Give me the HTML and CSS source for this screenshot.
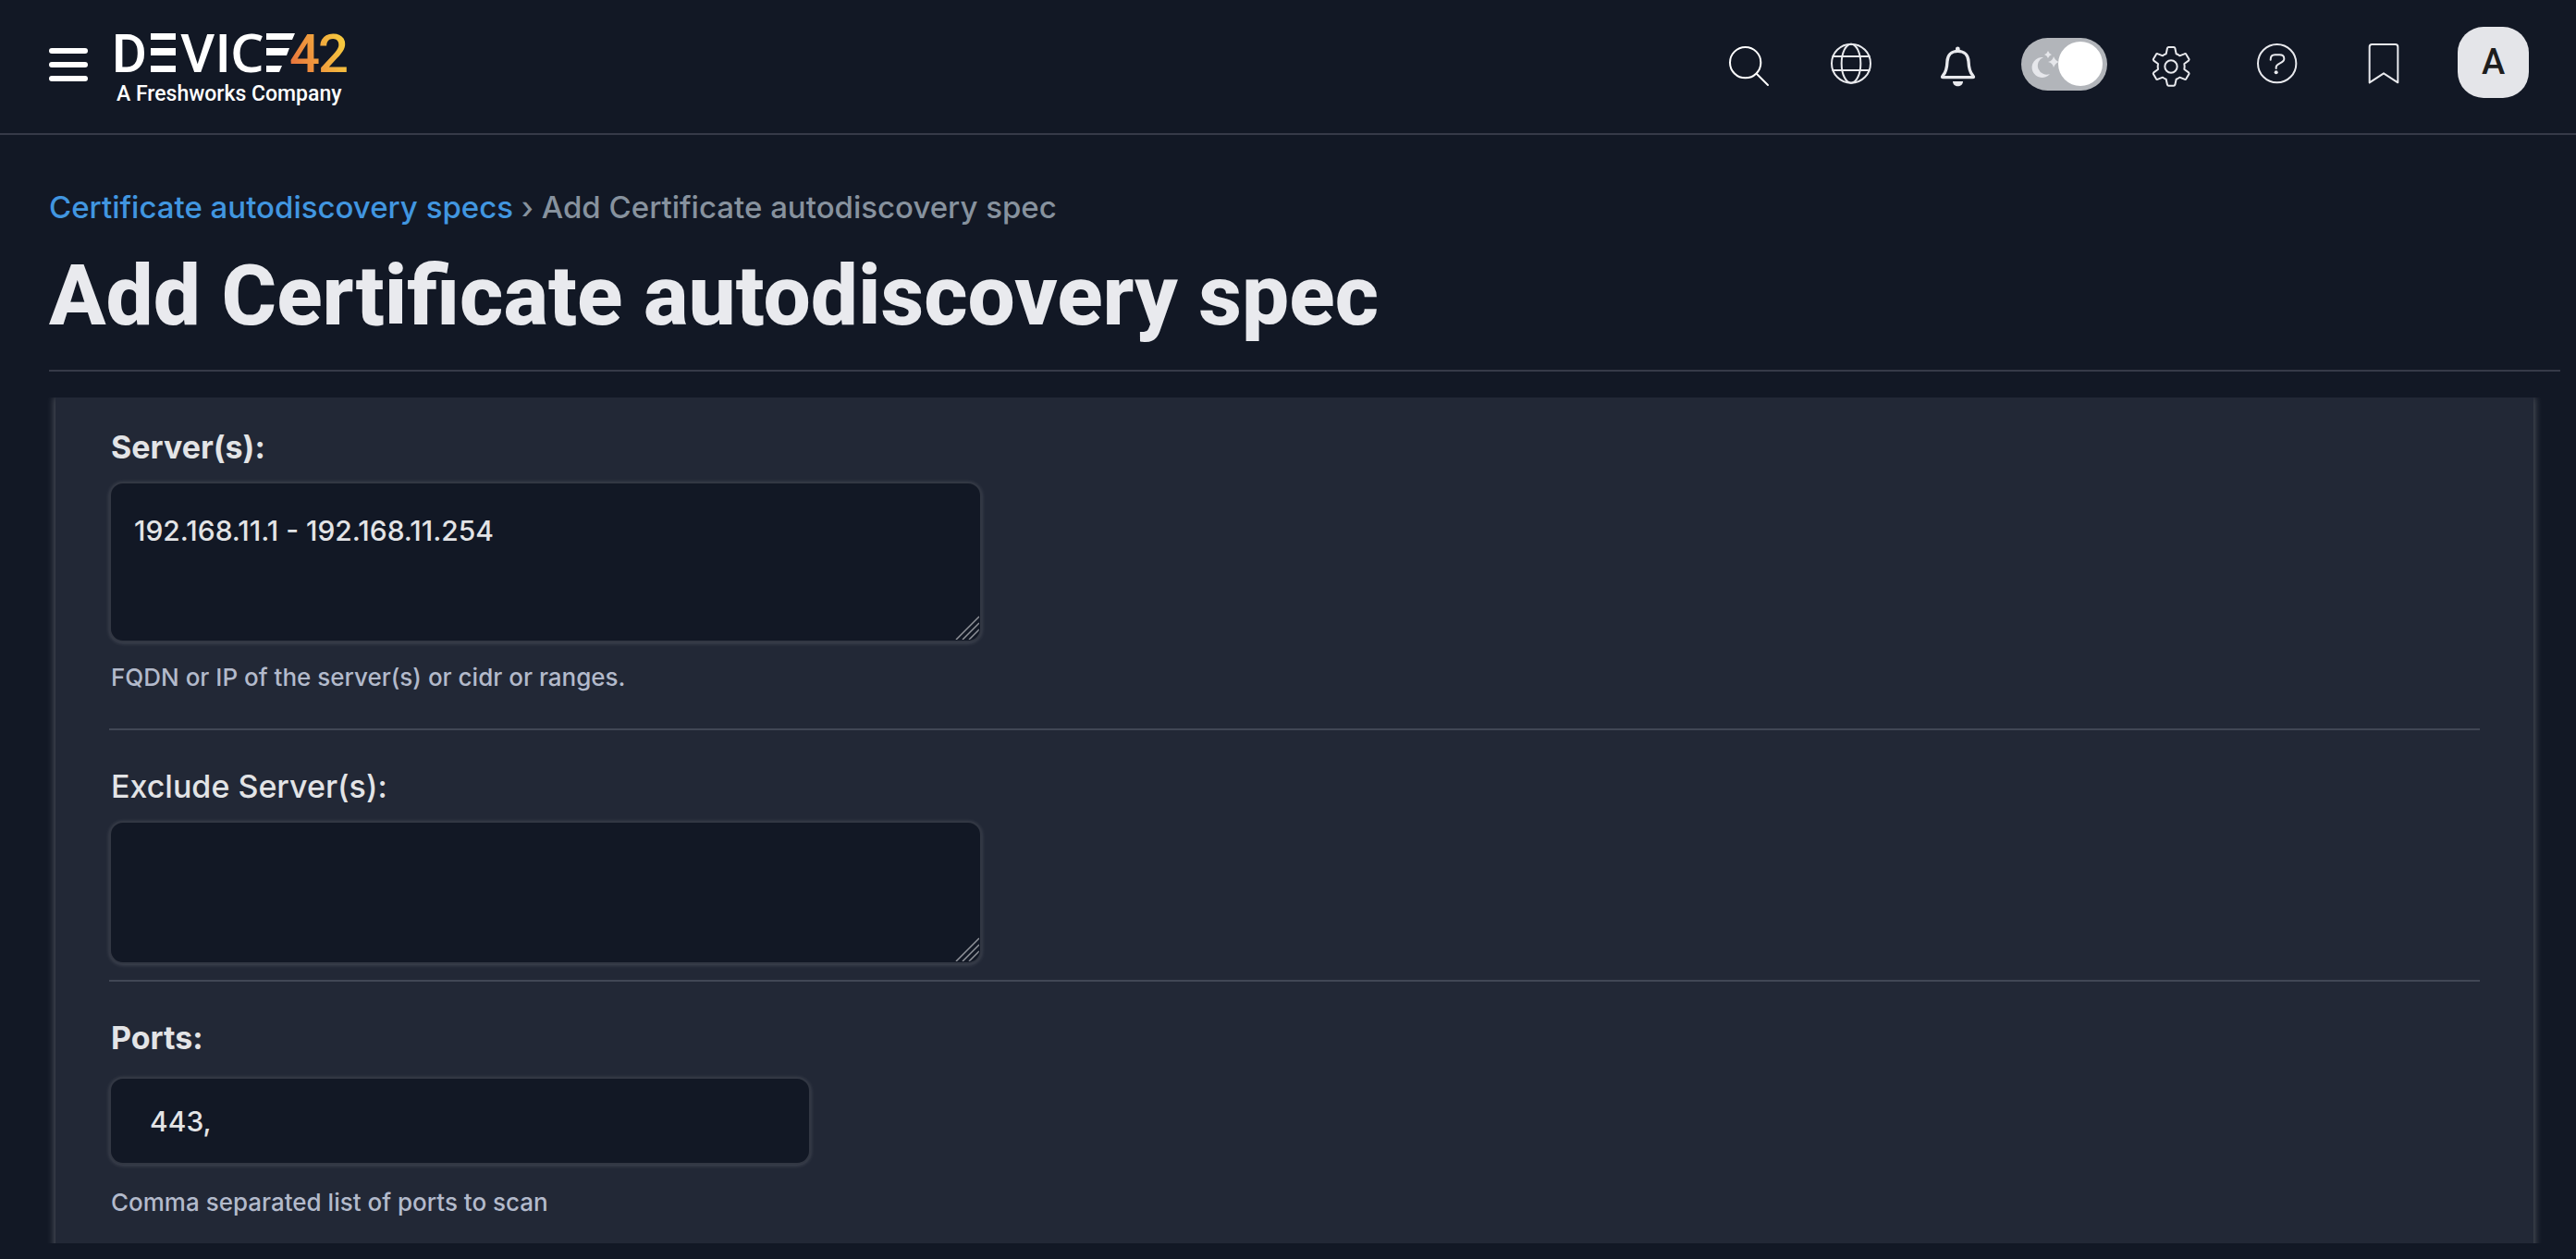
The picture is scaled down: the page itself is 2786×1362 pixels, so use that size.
FILE: index.html
```html
<!DOCTYPE html>
<html lang="en">
<head>
<meta charset="utf-8">
<meta name="viewport" content="width=device-width, initial-scale=1">
<title>Add Certificate autodiscovery spec</title>
<link rel="stylesheet" href="styles.css">
</head>
<body>
<header class="topbar">
  <button class="menu-button" type="button" aria-label="Menu">
    <span class="menu-bar"></span>
    <span class="menu-bar"></span>
    <span class="menu-bar"></span>
  </button>
  <a class="brand" href="#">
    <svg class="brand-logo" viewBox="0 0 254 50" aria-hidden="true">
      <defs>
        <linearGradient id="amber" gradientUnits="userSpaceOnUse" x1="190" y1="36" x2="252" y2="14">
          <stop offset="0" stop-color="#e9743c"/>
          <stop offset="1" stop-color="#f8cf3f"/>
        </linearGradient>
      </defs>
      <text class="logo-letter" x="-3" y="46">D</text>
      <path class="logo-bar" d="M39 4h27v7H39zM39 20h27v8H39zM39 39h27v7H39z"/>
      <text class="logo-letter" x="71" y="46">V</text>
      <text class="logo-letter" x="109" y="46">I</text>
      <text class="logo-letter logo-round" x="125" y="46">C</text>
      <path class="logo-bar" d="M164 4h31l-3 7h-28zM164 20h25l-3 8h-22zM164 39h17l-3 7h-14z"/>
      <text class="logo-letter logo-amber" x="189" y="46">4</text>
      <text class="logo-letter logo-amber" x="220" y="46">2</text>
    </svg>
    <span class="brand-tagline">A Freshworks Company</span>
  </a>
  <nav class="tools" aria-label="Tools">
    <button class="tool" type="button" aria-label="Search">
      <svg class="icon icon-bright" viewBox="72 75 144 144"><circle cx="143" cy="143" r="50"/><path d="M180 180l36 36"/></svg>
    </button>
    <button class="tool" type="button" aria-label="Language">
      <svg class="icon" viewBox="417 75 144 144"><circle cx="486" cy="146" r="63"/><ellipse cx="486" cy="146" rx="31" ry="63"/><path d="M427 123h118M427 168h118"/></svg>
    </button>
    <button class="tool" type="button" aria-label="Notifications">
      <svg class="icon" viewBox="762 75 144 144">
        <path class="stroke-heavy" d="M832 106c-21 0-33 14-34 33c-1 24-4 36-14 46c-4 5-3 6 1 6h95c4 0 5-1 1-6c-10-10-13-22-14-46c-1-19-13-33-35-33z"/>
        <path class="solid" d="M825 106v-8c0-9 14-9 14 0v8zM816 204h33c0 21-33 21-33 0z"/>
      </svg>
    </button>
    <label class="tool theme">
      <input class="theme-switch" type="checkbox" role="switch" aria-label="Dark mode" checked>
      <svg class="theme-moon" viewBox="0 0 30 30" aria-hidden="true">
        <path d="M13 7A11 11 0 1 0 20 25A9 9 0 0 1 13 7z"/>
        <path d="M18 0q1 3 4 4q-3 1-4 4q-1-3-4-4q3-1 4-4zM24 6q2 5 6 6q-4 1-6 6q-1-5-6-6q5-1 6-6z"/>
      </svg>
    </label>
    <button class="tool" type="button" aria-label="Settings">
      <svg class="icon" viewBox="72 105 144 144">
        <path d="M136 123h17q3 0 4 3l4 19q7 2 11 6l15-6q4-2 6 1l9 15q2 3-1 6l-14 10q2 9 0 18l14 10q3 3 1 6l-9 15q-2 3-6 1l-15-6q-4 4-11 6l-4 18q-1 3-4 3h-17q-3 0-4-3l-4-18q-7-2-11-6l-15 6q-4 2-6-1l-9-15q-2-3 1-6l14-10q-2-9 0-18l-14-10q-3-3-1-6l9-15q2-3 6-1l15 6q4-4 11-6l4-19q1-3 4-3z"/>
        <circle cx="144" cy="186" r="20"/>
      </svg>
    </button>
    <button class="tool" type="button" aria-label="Help">
      <svg class="icon" viewBox="417 105 144 144"><circle cx="488" cy="176" r="62"/><path d="M467 164c0-9 5-16 14-16h15c9 0 15 5 15 13c0 14-26 14-26 27v4"/><circle class="solid" cx="485" cy="205" r="6"/></svg>
    </button>
    <button class="tool" type="button" aria-label="Bookmarks">
      <svg class="icon" viewBox="762 105 144 144"><path d="M788 238V122q0-8 8-8h76q8 0 8 8v116l-46-30z"/></svg>
    </button>
    <button class="avatar" type="button" aria-label="Account">A</button>
  </nav>
</header>

<main class="page">
  <div class="page-head">
    <nav class="breadcrumb" aria-label="Breadcrumb"><a class="breadcrumb-link" href="#">Certificate autodiscovery specs</a> › Add Certificate autodiscovery spec</nav>
    <h1 class="page-title">Add Certificate autodiscovery spec</h1>
  </div>
  <div class="scroller">
    <form class="panel">
      <div class="field field-described">
        <label class="field-label required" for="servers">Server(s):</label>
        <div class="area-wrap">
          <textarea class="control area area-tall" id="servers" spellcheck="false">192.168.11.1 - 192.168.11.254</textarea>
          <svg class="grip" viewBox="0 0 26 26" aria-hidden="true"><path d="M1 26L26 1M8 26L26 8M15 26L26 15M22 26L26 22"/></svg>
        </div>
        <p class="field-help">FQDN or IP of the server(s) or cidr or ranges.</p>
      </div>
      <div class="field">
        <label class="field-label" for="exclude">Exclude Server(s):</label>
        <div class="area-wrap">
          <textarea class="control area" id="exclude" spellcheck="false"></textarea>
          <svg class="grip" viewBox="0 0 26 26" aria-hidden="true"><path d="M1 26L26 1M8 26L26 8M15 26L26 15M22 26L26 22"/></svg>
        </div>
      </div>
      <div class="field field-described">
        <label class="field-label required" for="ports">Ports:</label>
        <input class="control line" id="ports" type="text" value="443,">
        <p class="field-help">Comma separated list of ports to scan</p>
      </div>
    </form>
  </div>
</main>
</body>
</html>
```
FILE: styles.css
```css
:root {
  --bg: #121825;
  --surface: #222836;
  --text: #e9eaee;
  --icon: #e8e9ed;
  --rule: #363a48;
}

* {
  box-sizing: border-box;
}

body {
  margin: 0;
  height: 100vh;
  display: flex;
  flex-direction: column;
  background: var(--bg);
  color: var(--text);
  font-family: Inter, "Liberation Sans", sans-serif;
}

button {
  padding: 0;
  border: 0;
  background: none;
  color: inherit;
  cursor: pointer;
}

/* Top bar */
.topbar {
  flex: none;
  display: flex;
  align-items: center;
  min-height: 146px;
  padding: 0 51px 0 53px;
  border-bottom: 2px solid var(--rule);
}

.menu-button {
  display: flex;
  flex-direction: column;
  gap: 9px;
  width: 42px;
  margin: 0 29px 4px 0;
}

.menu-bar {
  height: 6px;
  border-radius: 3px;
  background: #fff;
}

.brand {
  display: flex;
  flex-direction: column;
  gap: 10px;
  color: #fff;
  text-decoration: none;
}

.brand-logo {
  display: block;
  width: 254px;
  height: 50px;
  overflow: visible;
}

.logo-letter {
  font: 500 58px Roboto, sans-serif;
  fill: #fff;
}

.logo-round {
  font-family: "Open Sans", sans-serif;
  font-weight: 600;
}

.logo-bar {
  fill: #fff;
}

.logo-amber {
  fill: url(#amber);
}

.brand-tagline {
  padding-left: 2px;
  font: 500 23px/20px Roboto, sans-serif;
}

.tools {
  display: flex;
  align-items: center;
  margin: 0 0 6px auto;
}

.tool {
  display: flex;
  justify-content: center;
  width: 115px;
}

.icon {
  width: 48px;
  height: 48px;
  overflow: visible;
  fill: none;
  stroke: var(--icon);
  stroke-width: 6;
  stroke-linecap: round;
  stroke-linejoin: round;
}

.icon-bright {
  stroke: #fff;
}

.icon .stroke-heavy {
  stroke-width: 10;
}

.icon .solid {
  fill: var(--icon);
  stroke: none;
}

.theme {
  position: relative;
}

.theme-switch {
  appearance: none;
  display: flex;
  justify-content: flex-end;
  width: 93px;
  height: 57px;
  margin: 0;
  padding: 4px 5px;
  border-radius: 29px;
  background: #b2b5ba;
}

.theme-switch::before {
  content: "";
  width: 48px;
  height: 48px;
  border-radius: 50%;
  background: #fff;
}

.theme-moon {
  position: absolute;
  left: 22px;
  top: 14px;
  width: 30px;
  height: 30px;
  fill: #e6e7eb;
}

.avatar {
  width: 77px;
  height: 77px;
  margin: 0 0 4px 23px;
  border-radius: 28px;
  background: #e4e5e9;
  color: #1d1d1d;
  font: 500 38px Roboto, sans-serif;
}

/* Page heading */
.page {
  flex: 1;
  min-height: 0;
  display: flex;
  flex-direction: column;
  padding: 58px 17px 17px 53px;
}

.page-head {
  padding-bottom: 26px;
  border-bottom: 2px solid var(--rule);
}

.breadcrumb {
  color: #87929e;
  font-size: 33px;
  font-weight: 500;
  line-height: 40px;
}

.breadcrumb-link {
  color: #4196e0;
  text-decoration: none;
}

.page-title {
  margin: 22px 0 0;
  font: 800 91px/108px Roboto, sans-serif;
}

/* Form */
.scroller {
  flex: 1;
  min-height: 0;
  margin: 28px 19px 0 -3px;
  padding: 0 10px;
  overflow: hidden;
}

.panel {
  min-height: 100%;
  padding: 0 58px 60px;
  background: var(--surface);
  box-shadow: 0 0 8px 1px rgba(255, 255, 255, 0.28);
}

.field {
  display: flex;
  flex-direction: column;
  align-items: flex-start;
  padding: 39px 0 17px;
  border-bottom: 2px solid #414755;
}

.field:first-child {
  padding-top: 32px;
}

.field:last-child {
  border-bottom: 0;
}

.field-described {
  padding-bottom: 37px;
}

.field-label {
  margin: 0 2px 15px;
  color: #e3e4e6;
  font-size: 34px;
  font-weight: 500;
  line-height: 44px;
}

.required {
  font-weight: 700;
}

.control {
  max-width: 100%;
  border: 2px solid #323743;
  border-radius: 15px;
  background: var(--bg);
  box-shadow: 0 1px 4px rgba(255, 255, 255, 0.16);
  color: #e3e4e6;
  font: 500 30px/40px Inter, sans-serif;
}

.area-wrap {
  display: grid;
  max-width: 100%;
}

.area {
  grid-area: 1 / 1;
  width: 944px;
  height: 155px;
  padding: 31px 25px;
  resize: both;
}

.area-tall {
  height: 174px;
}

.area::-webkit-resizer {
  background: transparent;
}

/* Drag handle drawn over the corner of a text area */
.grip {
  grid-area: 1 / 1;
  place-self: end;
  width: 26px;
  height: 26px;
  margin: 0 3px 3px 0;
  border-bottom-right-radius: 12px;
  fill: none;
  stroke: #90939a;
  stroke-width: 1.5;
  pointer-events: none;
  z-index: 1;
}

.line {
  width: 759px;
  height: 95px;
  margin: 5px 0 3px;
  padding: 0 42px;
}

.field-help {
  margin: 20px 2px 0;
  color: #b3bacb;
  font-size: 26px;
  font-weight: 500;
  line-height: 36px;
}
```
